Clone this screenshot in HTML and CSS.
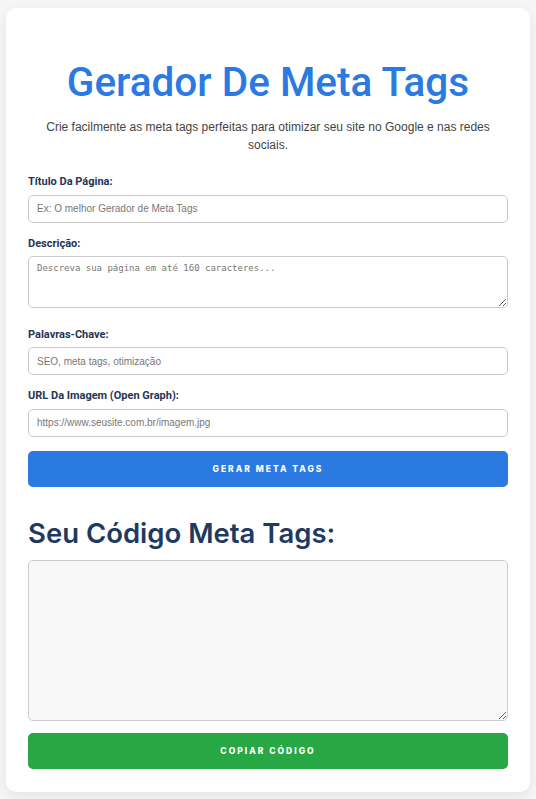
FILE: index.html
```html
<!DOCTYPE html>
<html lang="pt-BR">
<head>
    <meta charset="UTF-8">
    <meta name="viewport" content="width=device-width, initial-scale=1.0">
    <title>Gerador de Meta Tags</title>
    <link rel="stylesheet" href="styles.css">
</head>
<body>
    <div class="container">
        <h1>Gerador de meta tags</h1>
        <p class="subtitle">Crie facilmente as meta tags perfeitas para otimizar seu site no Google e nas redes sociais.</p>

        <form id="form">
            <div class="group">
                <label for="titulo">título da página:</label>
                <input type="text" id="titulo" placeholder="Ex: O melhor Gerador de Meta Tags">
            </div>
            <div class="group">
                <label for="descricao">descrição:</label>
                <textarea id="descricao" class="desc" placeholder="Descreva sua página em até 160 caracteres..."></textarea>
            </div>
            <div class="group">
                <label for="palavras">palavras-chave:</label>
                <input type="text" id="palavras" placeholder="SEO, meta tags, otimização">
            </div>
            <div class="group">
                <label for="imagem">URL da imagem (open graph):</label>
                <input type="text" id="imagem" placeholder="https://www.seusite.com.br/imagem.jpg">
            </div>
            <button type="submit" class="btn">Gerar meta tags</button>
        </form>

        <h2>Seu código meta tags:</h2>
        <textarea id="resultado" class="output" readonly></textarea>
        <button id="copiar" class="btn btn-green">Copiar código</button>
    </div>

    <script>
        document.getElementById("form").addEventListener("submit", (e) => {
            e.preventDefault()
            let titulo = document.getElementById("titulo").value
            let descricao = document.getElementById("descricao").value
            let palavras = document.getElementById("palavras").value
            let imagem = document.getElementById("imagem").value
            let codigo = `<title>${titulo}</title>\n`
            codigo += `<meta name="description" content="${descricao}">\n`
            codigo += `<meta name="keywords" content="${palavras}">\n`
            codigo += `<meta property="og:title" content="${titulo}">\n`
            codigo += `<meta property="og:description" content="${descricao}">\n`
            codigo += `<meta property="og:image" content="${imagem}">`
            document.getElementById("resultado").value = codigo
        })
        // copia o codigo gerado
        document.getElementById("copiar").addEventListener("click", () => {
            let out = document.getElementById("resultado")
            out.select()
            document.execCommand("copy")
        })
    </script>
</body>
</html>
```

FILE: styles.css
```css
body{
    margin: 0;
    padding: 8px 6px;
    background-color: #f6f6f6;
    font-family: "Liberation Sans", Arial, sans-serif;
}
.container{
    max-width: 600px;
    margin: 0 auto;
    background-color: #fff;
    padding: 22px 22px 23px;
    border-radius: 10px;
    box-shadow: 0 4px 14px rgba(0, 0, 0, 0.08);
}
h1{
    font-family: Roboto, sans-serif;
    font-size: 40.5px;
    font-weight: 500;
    line-height: 48px;
    color: #2a7ae2;
    text-align: center;
    text-transform: capitalize;
    margin: 28px 0 12px;
}
.subtitle{
    font-size: 12px;
    line-height: 18px;
    color: #444;
    text-align: center;
    margin: 0 0 21px;
}
.group{
    margin-bottom: 14px;
}
label{
    display: block;
    font-family: Roboto, sans-serif;
    font-size: 11px;
    font-weight: 700;
    line-height: 14px;
    color: #1f3556;
    text-transform: capitalize;
    margin-bottom: 5.5px;
}
input, textarea{
    display: block;
    width: 100%;
    box-sizing: border-box;
    border: 1px solid #ccc;
    border-radius: 5px;
    padding: 6px 8px;
    color: #333;
}
input{
    height: 28px;
    font-family: "Liberation Sans", Arial, sans-serif;
    font-size: 10px;
}
textarea{
    font-family: "DejaVu Sans Mono", monospace;
    font-size: 9px;
}
.desc{
    height: 52px;
    margin-bottom: 19.5px;
}
input::placeholder, textarea::placeholder{
    color: #777;
}
.btn{
    display: block;
    width: 100%;
    height: 36px;
    border: none;
    border-radius: 5px;
    background-color: #2a7ae2;
    color: #fff;
    font-family: Inter, sans-serif;
    font-size: 8.5px;
    font-weight: 800;
    letter-spacing: 2px;
    text-transform: uppercase;
}
.btn-green{
    background-color: #28a745;
    margin-top: 12px;
}
form .btn{
    margin-top: 1.5px;
}
h2{
    font-family: Inter, sans-serif;
    font-size: 27.5px;
    font-weight: 600;
    line-height: 34px;
    color: #1f3a5f;
    text-transform: capitalize;
    margin: 29.5px 0 10px;
}
.output{
    height: 161px;
    background-color: #f8f8f8;
}
```
